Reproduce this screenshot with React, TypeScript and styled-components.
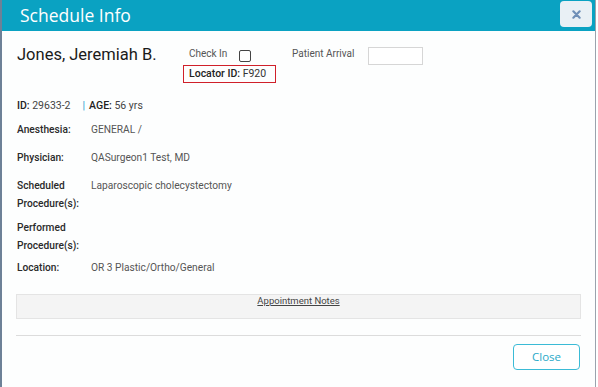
import styled, { createGlobalStyle } from "styled-components";

const GlobalStyle = createGlobalStyle`
    html, body {
    margin: 0;
    padding: 0;
    background: #fff;
    font-family: Roboto, "Liberation Sans", sans-serif;
    }
`

const Dialog = styled.div`
    width: 596px;
    height: 387px;
    box-sizing: border-box;
    border-left: 2px solid #6d8197;
    border-right: 1px solid #9aa3ad;
    display: flex;
    flex-direction: column;
    background: #fdfefe;
`

const Header = styled.div`
    height: 31px;
    flex: 0 0 31px;
    background: #0aa2c2;
    display: flex;
    justify-content: space-between;
    align-items: flex-start;
    padding: 0 3px 0 18px;
    box-sizing: border-box;
`

const Title = styled.h2`
    margin: 0;
    font-family: "Open Sans", "Liberation Sans", sans-serif;
    font-weight: 400;
    font-size: 17.5px;
    line-height: 31px;
    color: #fff;
`

const XButton = styled.button`
    width: 32px;
    height: 26px;
    margin-top: 1px;
    padding: 0;
    border: none;
    border-radius: 4px;
    background: #e9f0f5;
    display: flex;
    align-items: center;
    justify-content: center;
`

const Body = styled.div`
    flex: 1;
    padding: 13px 14px 0 14px;
    display: flex;
    flex-direction: column;
`

const TopRow = styled.div`
    display: flex;
    align-items: flex-start;
`

const Name = styled.div`
    width: 166px;
    padding-left: 1px;
    font-size: 16.5px;
    font-weight: 400;
    color: #1a1a1a;
    line-height: 22px;
`

const CheckGroup = styled.div`
    width: 107px;
    display: flex;
    flex-direction: column;
`

const Inline = styled.div`
    display: flex;
    align-items: center;
    gap: 12px;
    height: 20px;
    padding-left: 6px;
`

const SmallLabel = styled.span`
    font-size: 10px;
    line-height: 20px;
    color: #555;
`

const Box = styled.span`
    width: 10px;
    height: 10px;
    border: 1px solid #444;
    border-radius: 2px;
    background: #fff;
    margin-top: 3px;
`

const Locator = styled.div`
    width: 93px;
    height: 18px;
    box-sizing: border-box;
    border: 1px solid #d0202a;
    padding-left: 5px;
    font-size: 10.5px;
    line-height: 16px;
    color: #333;
    margin-top: 1px;

    b {
    font-weight: 500;
    color: #222;
    }
`

const Arrival = styled.div`
    display: flex;
    align-items: flex-start;
    gap: 14px;
    padding-left: 2px;
`

const ArrivalInput = styled.div`
    width: 55px;
    height: 18px;
    margin-top: 3px;
    box-sizing: border-box;
    border: 1px solid #d6d6d6;
    background: #fff;
`

const IdLine = styled.div`
    margin-top: 14px;
    padding-left: 1px;
    font-size: 10.5px;
    line-height: 18px;
    color: #444;
    margin-bottom: 6px;

    b {
    font-weight: 500;
    color: #222;
    }
`

const Sep = styled.span`
    color: #1a9fd0;
    margin: 0 4px 0 12px;
`

const Row = styled.div<{ $gap?: number }>`
    display: grid;
    grid-template-columns: 74px 1fr;
    padding-left: 1px;
    line-height: 18px;
    margin-bottom: ${p => p.$gap ?? 10}px;
`

const Label = styled.div`
    font-size: 10.2px;
    color: #2a2a2a;
    font-weight: 500;
`

const Value = styled.div`
    font-size: 10.2px;
    color: #555;
`

const Notes = styled.div`
    margin-top: 7px;
    height: 25px;
    box-sizing: border-box;
    border: 1px solid #e4e4e4;
    background: #f4f4f4;
    text-align: center;
    font-size: 9.5px;
    line-height: 12px;
    color: #444;
    text-decoration: underline;
`

const Divider = styled.hr`
    margin: 16px 0 8px 0;
    border: none;
    border-top: 1px solid #dcdcdc;
`

const Footer = styled.div`
    display: flex;
    justify-content: flex-end;
    padding-right: 1px;
`

const CloseButton = styled.button`
    width: 67px;
    height: 26px;
    border: 1px solid #3bbbd6;
    border-radius: 4px;
    background: #fff;
    color: #28a9c8;
    font-family: "Open Sans", "Liberation Sans", sans-serif;
    font-size: 11.5px;
    padding: 0 0 2px 0;
`

const rows = [
    { label: "Anesthesia:", value: "GENERAL /" },
    { label: "Physician:", value: "QASurgeon1 Test, MD" },
    { label: "Scheduled Procedure(s):", value: "Laparoscopic cholecystectomy", gap: 6 },
    { label: "Performed Procedure(s):", value: "", gap: 4 },
    { label: "Location:", value: "OR 3 Plastic/Ortho/General" },
]

export const App = () => {
    return (
        <>
            <GlobalStyle />
            <Dialog>
                <Header>
                    <Title>Schedule Info</Title>
                    <XButton aria-label="close">
                        <svg width="9" height="9" viewBox="0 0 10 10">
                            <path d="M1.5 1.5 L8.5 8.5 M8.5 1.5 L1.5 8.5" stroke="#6f8fb7" strokeWidth="2.4" strokeLinecap="round" />
                        </svg>
                    </XButton>
                </Header>
                <Body>
                    <TopRow>
                        <Name>Jones, Jeremiah B.</Name>
                        <CheckGroup>
                            <Inline>
                                <SmallLabel>Check In</SmallLabel>
                                <Box />
                            </Inline>
                            <Locator><b>Locator ID:</b> F920</Locator>
                        </CheckGroup>
                        <Arrival>
                            <SmallLabel>Patient Arrival</SmallLabel>
                            <ArrivalInput />
                        </Arrival>
                    </TopRow>
                    <IdLine>
                        <b>ID:</b> 29633-2
                        <Sep>|</Sep>
                        <b>AGE:</b> 56 yrs
                    </IdLine>
                    {rows.map(r => (
                        <Row key={r.label} $gap={r.gap}>
                            <Label>{r.label}</Label>
                            <Value>{r.value}</Value>
                        </Row>
                    ))}
                    <Notes>Appointment Notes</Notes>
                    <Divider />
                    <Footer>
                        <CloseButton>Close</CloseButton>
                    </Footer>
                </Body>
            </Dialog>
        </>
    )
}

export default App;
